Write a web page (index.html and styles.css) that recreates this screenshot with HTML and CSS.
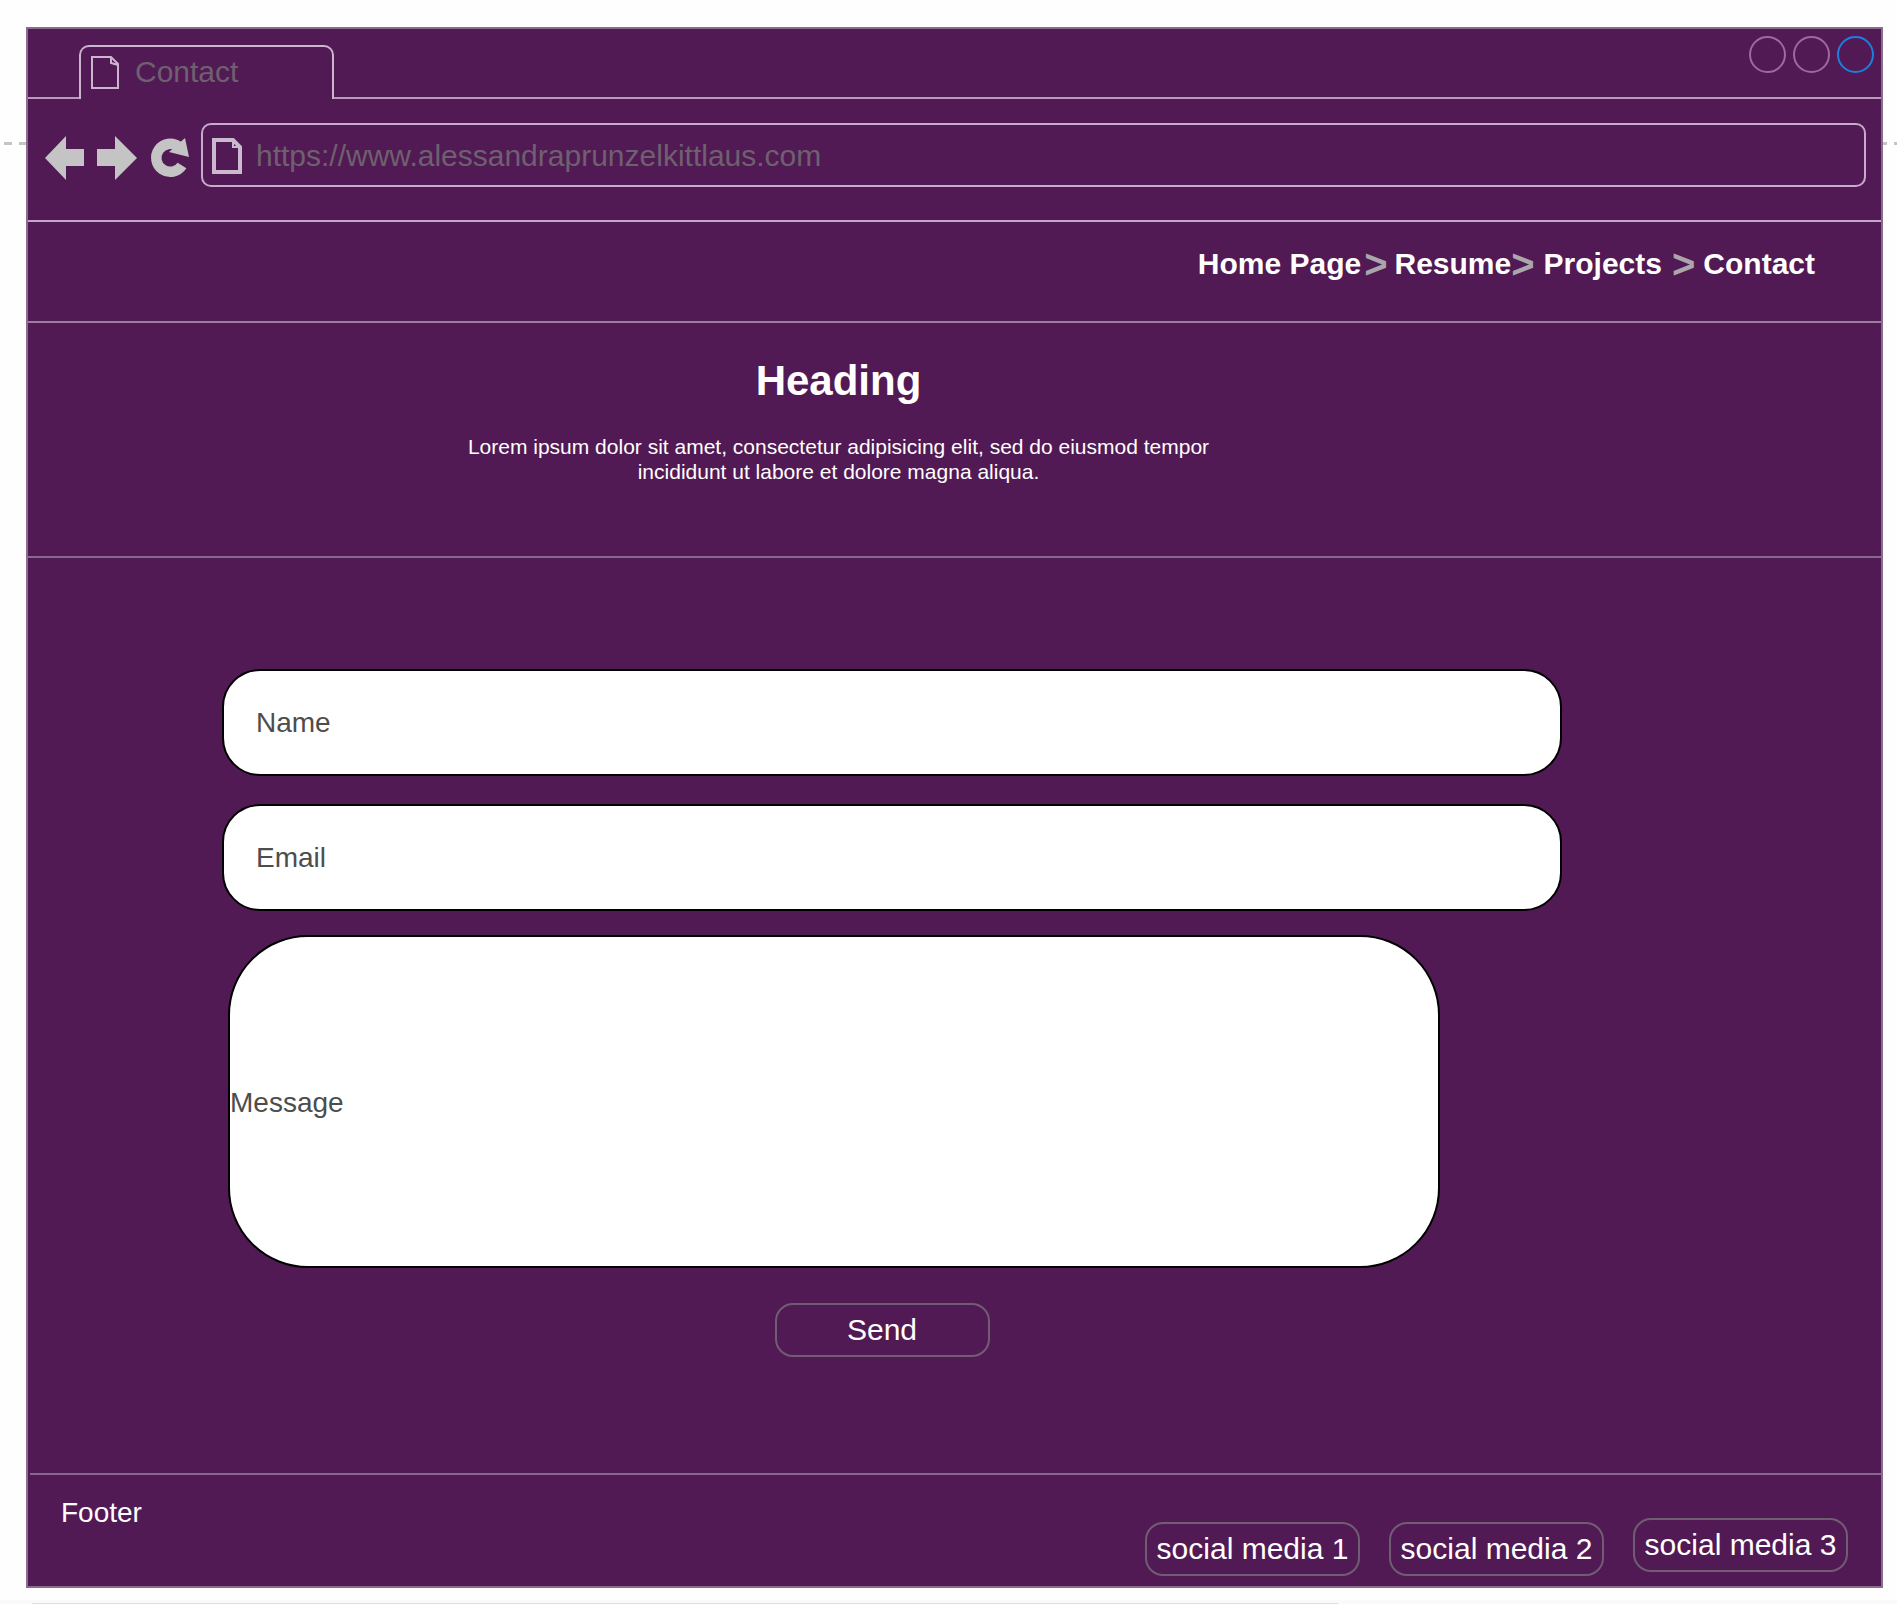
FILE: index.html
```html
<!DOCTYPE html>
<html lang="en">
<head>
<meta charset="utf-8">
<meta name="viewport" content="width=device-width, initial-scale=1">
<title>Contact</title>
<link rel="stylesheet" href="styles.css">
</head>
<body>
<div class="canvas">
  <div class="browser">
    <div class="tab-strip">
      <div class="strip-start"></div>
      <div class="tab">
        <svg class="tab-icon" viewBox="0 0 28 34" aria-hidden="true"><path d="M1 1H20L27 8V32H1Z M20 1V7L27 9" fill="none" stroke="#cdb4cf" stroke-width="2"/></svg>
        <span class="tab-title">Contact</span>
      </div>
      <div class="strip-end">
        <span class="dot"></span>
        <span class="dot"></span>
        <span class="dot dot-active"></span>
      </div>
    </div>

    <div class="toolbar">
      <button class="tool" type="button" aria-label="Back">
        <svg width="40" height="44" viewBox="0 0 40 44"><path d="M0 22L21 0V13H39V30H21V44Z" fill="#c4c4c4"/></svg>
      </button>
      <button class="tool" type="button" aria-label="Forward">
        <svg width="40" height="44" viewBox="0 0 40 44"><path d="M40 22L18 0V13H0V30H18V44Z" fill="#c4c4c4"/></svg>
      </button>
      <button class="tool" type="button" aria-label="Reload">
        <svg width="40" height="44" viewBox="-2 0 40 44"><path d="M31 29.500A14 14 0 1 1 27.500 10.500" fill="none" stroke="#c4c4c4" stroke-width="10.500"/><path d="M34 2L38 21L18 16Z" fill="#c4c4c4"/></svg>
      </button>
      <label class="address">
        <svg class="address-icon" viewBox="0 0 30 36" aria-hidden="true"><path d="M2 2H21L28 9V34H2Z" fill="none" stroke="#cbb9cd" stroke-width="4"/><path d="M21 2V9H28" fill="none" stroke="#cbb9cd" stroke-width="2"/></svg>
        <input class="address-input" type="text" aria-label="Address" value="https://www.alessandraprunzelkittlaus.com">
      </label>
    </div>

    <nav class="crumbs">
      <a href="#home">Home Page</a>
      <span class="arrow">&gt;</span>
      <a href="#resume">Resume</a>
      <span class="arrow arrow-tight">&gt;</span>
      <a href="#projects">Projects</a>
      <span class="arrow arrow-wide">&gt;</span>
      <a href="#contact">Contact</a>
    </nav>

    <header class="intro">
      <h1>Heading</h1>
      <p>Lorem ipsum dolor sit amet, consectetur adipisicing elit, sed do eiusmod tempor incididunt ut labore et dolore magna aliqua.</p>
    </header>

    <form class="contact-form">
      <input class="field" type="text" aria-label="Name" placeholder="Name">
      <input class="field" type="email" aria-label="Email" placeholder="Email">
      <textarea class="message" aria-label="Message" placeholder="Message"></textarea>
      <div class="actions"><button class="pill" type="button">Send</button></div>
    </form>

    <footer class="site-footer">
      <span class="footer-title">Footer</span>
      <div class="social">
        <a class="pill" href="#social-1">social media 1</a>
        <a class="pill" href="#social-2">social media 2</a>
        <a class="pill pill-raised" href="#social-3">social media 3</a>
      </div>
    </footer>
  </div>
</div>
<div class="status-bar"></div>
</body>
</html>
```

FILE: styles.css
```css
* { box-sizing: border-box; }

body {
  margin: 0;
  background: #fefefe;
  font-family: "Liberation Sans", Arial, sans-serif;
  font-size: 30px;
  line-height: 36px;
  color: #fff;
}

a { color: inherit; text-decoration: none; }

button, input, textarea {
  font: inherit;
  color: inherit;
  margin: 0;
}

/* Dashed guide that runs behind the browser frame */
.canvas {
  padding: 27px 14px 12px 26px;
  background: repeating-linear-gradient(90deg, #c4c4c4 0 8px, transparent 8px 15px) 4px 142px / 100% 3px no-repeat;
}

.browser {
  background: #521a54;
  border: 2px solid #8a6c8d;
}

.tab-strip { display: flex; height: 70px; }

.strip-start { width: 51px; border-bottom: 2px solid #b79bb9; }

.tab {
  display: flex;
  align-items: center;
  gap: 16px;
  width: 255px;
  margin-top: 16px;
  padding: 0 10px;
  border: 2px solid #cdb4cf;
  border-bottom: 0;
  border-radius: 10px 10px 0 0;
  color: #6e606f;
}

.tab-icon { width: 28px; height: 34px; }

.tab-title { padding-bottom: 3px; }

.strip-end {
  flex: 1;
  display: flex;
  justify-content: flex-end;
  gap: 7px;
  padding: 7px 7px 0 0;
  border-bottom: 2px solid #b79bb9;
}

.dot {
  width: 37px;
  height: 37px;
  border: 2px solid #9a6aa0;
  border-radius: 50%;
}

.dot-active { border-color: #1c7fe0; }

.toolbar {
  display: flex;
  align-items: center;
  gap: 12px;
  padding: 24px 15px 33px 17px;
  border-bottom: 2px solid #c4a7c7;
}

.tool {
  display: block;
  height: 44px;
  margin-top: 6px;
  padding: 0;
  border: 0;
  background: none;
}

.tool svg { display: block; overflow: visible; }

.address {
  flex: 1;
  display: flex;
  align-items: center;
  gap: 14px;
  height: 64px;
  padding: 2px 9px 0;
  border: 2px solid #c8abca;
  border-radius: 10px;
}

.address-icon { width: 30px; height: 36px; }

.address-input {
  flex: 1;
  height: 36px;
  padding: 0;
  border: 0;
  background: none;
  color: #6e606f;
}

.crumbs {
  display: flex;
  justify-content: flex-end;
  padding: 24px 66px 39px 0;
  border-bottom: 2px solid #9a7e9c;
  font-weight: 700;
}

.arrow {
  margin: 0 7px 0 3px;
  font-size: 40px;
  color: #aaa6ab;
}

.arrow-tight { margin: 0 9px 0 0; }
.arrow-wide { margin: 0 8px 0 10px; }

.intro {
  padding: 34px 232px 72px 0;
  border-bottom: 2px solid #866a89;
  text-align: center;
}

.intro h1 {
  margin: 0 0 29px;
  font-size: 42px;
  line-height: 48px;
}

.intro p {
  max-width: 760px;
  margin: 0 auto;
  font-size: 21px;
  line-height: 25px;
}

.contact-form {
  display: flex;
  flex-direction: column;
  padding: 111px 319px 116px 194px;
  font-size: 28px;
}

.field, .message {
  border: 2px solid #000;
  background: #fff;
  color: #4d4d4d;
}

.field {
  height: 107px;
  margin-bottom: 28px;
  padding: 0 32px;
  border-radius: 38px;
}

.message {
  height: 333px;
  margin: -4px 122px 35px 6px;
  padding: 148px 0;
  border-radius: 80px;
  resize: none;
  overflow: hidden;
}

::placeholder { color: #4d4d4d; opacity: 1; }

.actions {
  display: flex;
  justify-content: center;
  padding-right: 20px;
}

.pill {
  width: 215px;
  height: 54px;
  padding: 0;
  border: 2px solid #705d72;
  border-radius: 18px;
  background: none;
  font-size: 30px;
  line-height: 50px;
  text-align: center;
}

.site-footer {
  display: flex;
  justify-content: space-between;
  margin-left: 2px;
  padding: 22px 33px 10px 31px;
  border-top: 2px solid #866a89;
}

.footer-title { font-size: 28px; line-height: 32px; }

.social {
  display: flex;
  gap: 29px;
  padding-top: 25px;
}

.pill-raised { margin-top: -4px; }

.status-bar {
  height: 4px;
  padding: 3px 559px 0 32px;
  background: linear-gradient(#ddd, #ddd) content-box, #fafafa;
}
```
